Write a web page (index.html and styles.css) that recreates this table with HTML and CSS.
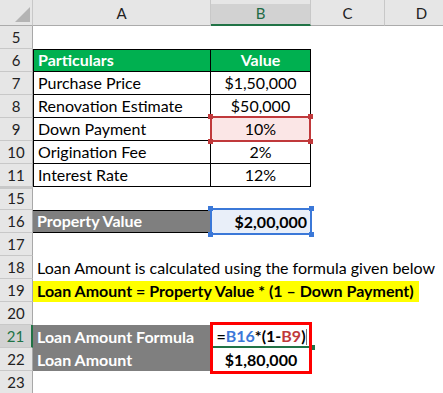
FILE: index.html
```html
<!DOCTYPE html>
<html>
<head>
<meta charset="utf-8">
<link rel="stylesheet" href="styles.css">
</head>
<body>
<div class="sheet">
  <div class="corner"><span class="tri"></span></div>
  <div class="ch">A</div>
  <div class="ch sel">B</div>
  <div class="ch">C</div>
  <div class="ch">D</div>

  <div class="rh">5</div><div class="c"></div><div class="c"></div><div class="c"></div><div class="c"></div>

  <div class="rh">6</div><div class="c tb ta th left">Particulars</div><div class="c tb ta th mid">Value</div><div class="c"></div><div class="c"></div>
  <div class="rh">7</div><div class="c tb left">Purchase Price</div><div class="c tb mid">$1,50,000</div><div class="c"></div><div class="c"></div>
  <div class="rh">8</div><div class="c tb left">Renovation Estimate</div><div class="c tb mid">$50,000</div><div class="c"></div><div class="c"></div>
  <div class="rh">9</div><div class="c tb left">Down Payment</div><div class="c tb mid refcell"><div class="ref red"><i class="h tl"></i><i class="h tr"></i><i class="h bl"></i><i class="h br"></i></div><span class="v">10%</span></div><div class="c"></div><div class="c"></div>
  <div class="rh">10</div><div class="c tb left">Origination Fee</div><div class="c tb mid">2%</div><div class="c"></div><div class="c"></div>
  <div class="rh">11</div><div class="c tb left">Interest Rate</div><div class="c tb mid">12%</div><div class="c"></div><div class="c"></div>

  <div class="rh hid">15</div><div class="c"></div><div class="c"></div><div class="c"></div><div class="c"></div>
  <div class="rh">16</div><div class="c gray pv left">Property Value</div><div class="c right bold refcell"><div class="ref blue"><i class="h tl"></i><i class="h tr"></i><i class="h bl"></i><i class="h br"></i></div><span class="v">$2,00,000</span></div><div class="c"></div><div class="c"></div>
  <div class="rh">17</div><div class="c"></div><div class="c"></div><div class="c"></div><div class="c"></div>
  <div class="rh">18</div><div class="c span4 left">Loan Amount is calculated using the formula given below</div>
  <div class="rh">19</div><div class="c span4 left"><span class="hl">Loan Amount = Property Value * (1 – Down Payment)</span></div>
  <div class="rh">20</div><div class="c"></div><div class="c"></div><div class="c"></div><div class="c"></div>
  <div class="rh act">21</div><div class="c gray left">Loan Amount Formula</div><div class="c mid bold active"><span class="v">=<span class="rb">B16</span>*(1-<span class="rr">B9</span>)</span><i class="caret"></i><i class="fillh"></i><div class="redbox"></div></div><div class="c"></div><div class="c"></div>
  <div class="rh">22</div><div class="c gray left">Loan Amount</div><div class="c mid bold">$1,80,000</div><div class="c"></div><div class="c"></div>
  <div class="rh">23</div><div class="c"></div><div class="c"></div><div class="c"></div><div class="c"></div>
</div>
</body>
</html>
```

FILE: styles.css
```css
html, body { margin: 0; padding: 0; background: #fff; }
body { width: 443px; height: 393px; overflow: hidden; }
.sheet {
  display: grid;
  grid-template-columns: 33px 178px 100px 74px 74px;
  grid-template-rows: 26px;
  grid-auto-rows: 23px;
  width: 459px;
  font-family: Lato, "Liberation Sans", sans-serif;
  font-size: 16px;
  color: #000;
}
.corner {
  position: relative;
  background: #e6e6e6;
  border-right: 1px solid #c8c8c8;
  border-bottom: 1px solid #ababab;
  box-sizing: border-box;
}
.tri {
  position: absolute;
  right: 2px;
  bottom: 3px;
  width: 0; height: 0;
  border-left: 15px solid transparent;
  border-bottom: 15px solid #b4b4b4;
}
.ch {
  background: #e6e6e6;
  border-right: 1px solid #c8c8c8;
  border-bottom: 1px solid #ababab;
  box-sizing: border-box;
  display: flex;
  align-items: flex-end;
  justify-content: center;
  padding-bottom: 3px;
  font-size: 15px;
  color: #222;
}
.ch.sel {
  background: linear-gradient(#e6e6e6 0 4px, #d2d2d2 4px);
  border-bottom: 2px solid #217346;
  color: #1e6b45;
  padding-bottom: 2px;
}
.rh {
  background: #e6e6e6;
  border-right: 1px solid #a8a8a8;
  border-bottom: 1px solid #c8c8c8;
  box-sizing: border-box;
  display: flex;
  align-items: flex-end;
  justify-content: center;
  padding-bottom: 2px;
  font-size: 15px;
  color: #222;
}
.rh.hid { border-top: 2px solid #c8c8c8; }
.rh.act {
  background: #d2d2d2;
  color: #217346;
  border-right: 2px solid #217346;
}
.c {
  box-sizing: border-box;
  display: flex;
  align-items: flex-end;
  padding: 0 4px 2px 4px;
  white-space: nowrap;
  line-height: 19px;
}
.left { justify-content: flex-start; }
.mid { justify-content: center; }
.right { justify-content: flex-end; }
.bold { font-weight: 700; }
.tb { border-bottom: 1px solid #000; border-right: 1px solid #000; }
.ta { border-top: 1px solid #000; }
.tb.left { border-left: 1px solid #000; }
.th { background: #00b050; color: #fff; font-weight: 700; }
.gray { background: #7f7f7f; color: #fff; font-weight: 700; }
.pv { border-top: 1px solid #000; border-bottom: 1px solid #000; }
.span4 { grid-column: span 4; overflow: visible; }
.hl { background: #ffff00; font-weight: 700; display: block; margin-left: -4px; padding-left: 4px; width: 382px; margin-bottom: -2px; padding-bottom: 2px; }
.refcell { position: relative; }
.refcell .v { position: relative; }
.ref {
  position: absolute;
  left: -1px; top: -2px; right: -1px; bottom: -2px;
  border: 2px solid;
}
.ref.red { background: #fbe6e6; border-color: #c0393b; }
.ref.blue { background: #e9eff9; border-color: #3b78d8; }
.h {
  position: absolute;
  width: 5px; height: 5px;
}
.red .h { background: #c0393b; }
.blue .h { background: #3b78d8; }
.h.tl { left: -4px; top: -4px; }
.h.tr { right: -4px; top: -4px; }
.h.bl { left: -4px; bottom: -4px; }
.h.br { right: -4px; bottom: -4px; }
.active { position: relative; border-bottom: 2px solid #217346; padding-bottom: 1px; }
.rb { color: #3c78d8; }
.rr { color: #c0393b; }
.caret {
  position: absolute;
  left: 95px; top: 4px;
  width: 1px; height: 16px;
  background: #777;
}
.fillh {
  position: absolute;
  right: -4px; bottom: -4px;
  width: 5px; height: 5px;
  background: #217346;
}
.redbox {
  position: absolute;
  left: -1px; top: -3px;
  width: 102px; height: 52px;
  box-sizing: border-box;
  border: 3px solid #ff0000;
  z-index: 2;
}
```
